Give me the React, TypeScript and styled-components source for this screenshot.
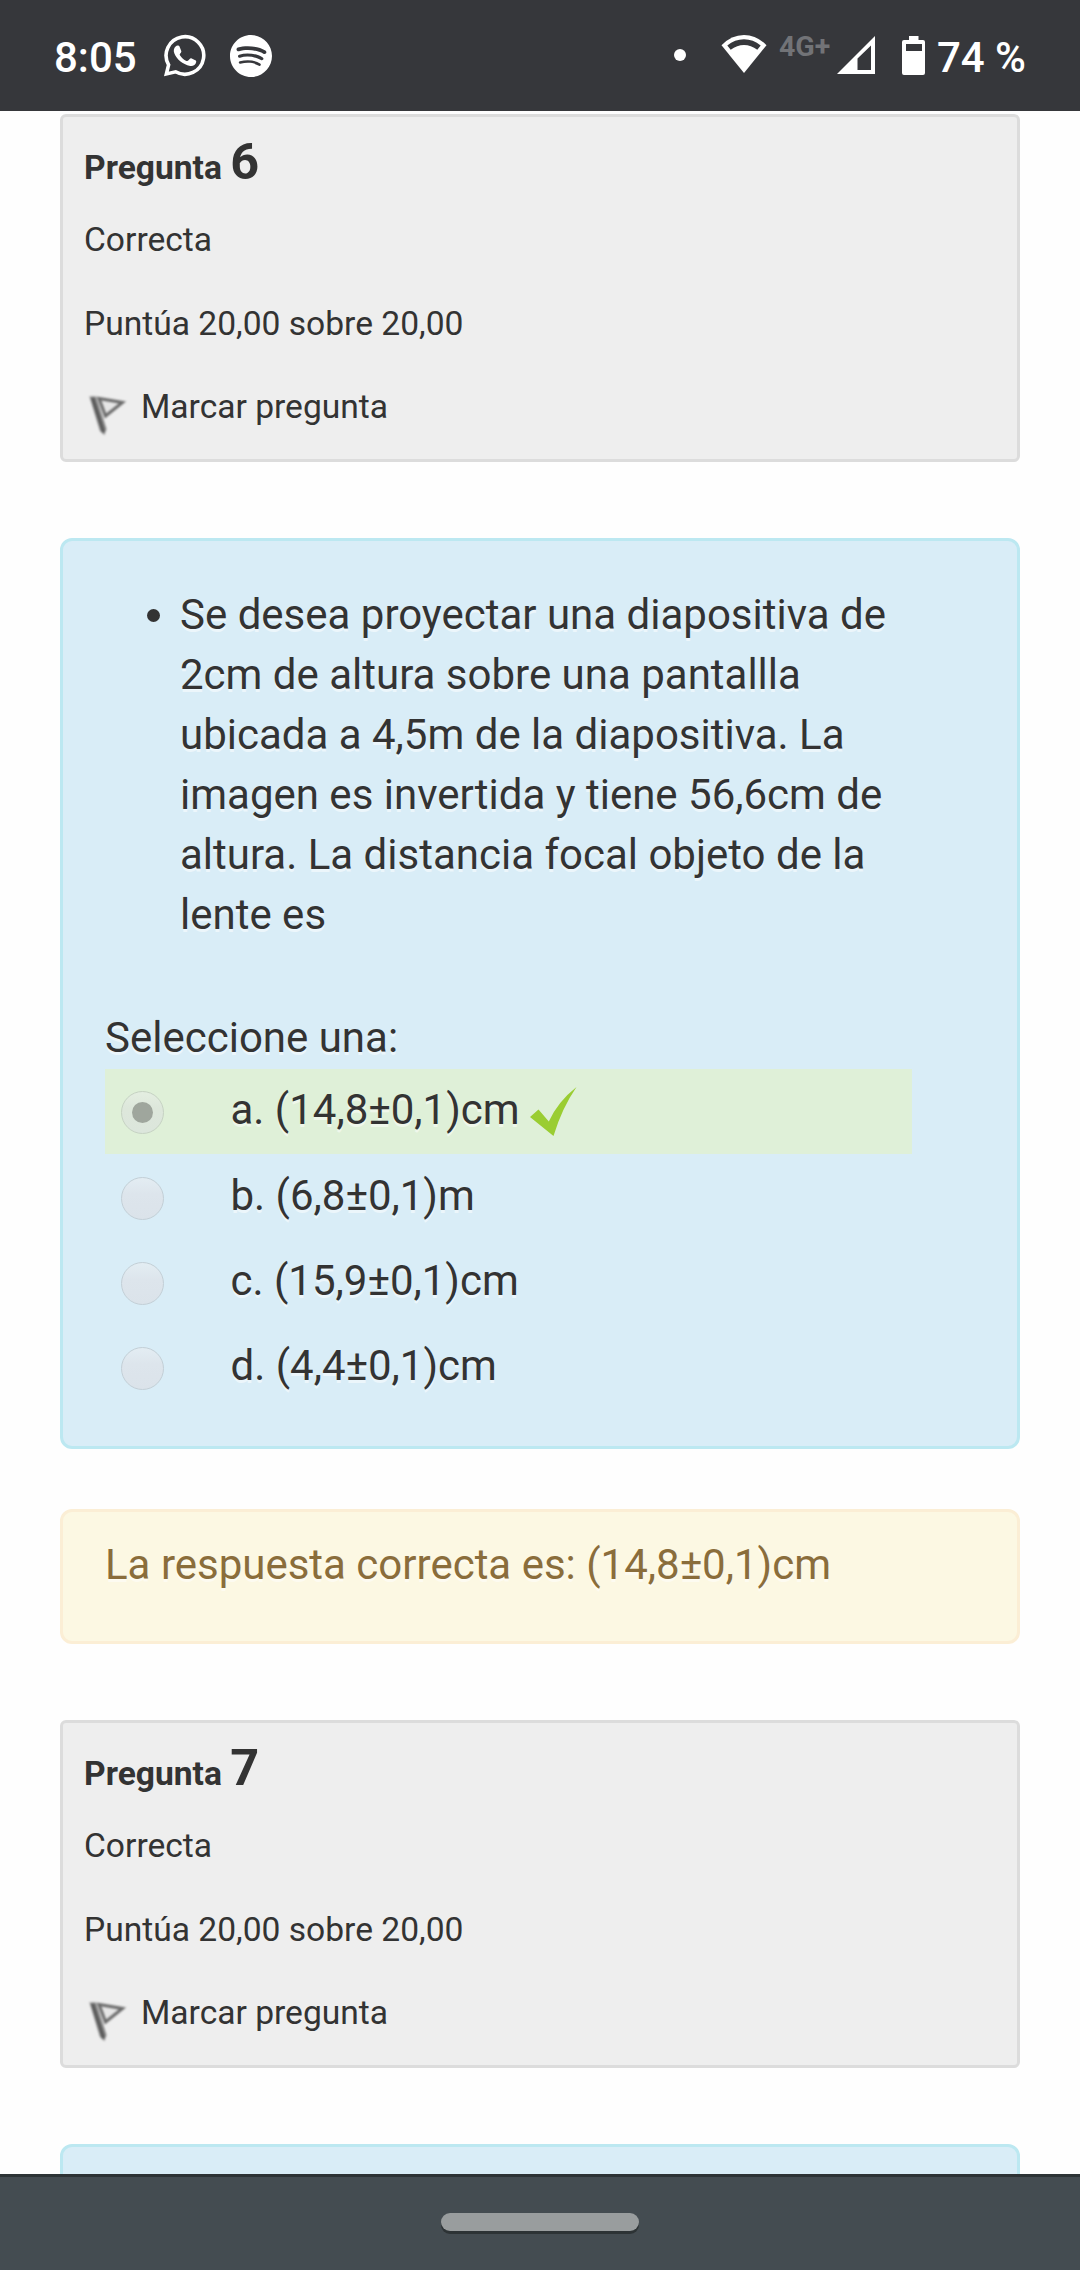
import React from "react";
import styled, { createGlobalStyle } from "styled-components";
import { SiSpotify } from "react-icons/si";

const GlobalStyle = createGlobalStyle`
  *, *::before, *::after { box-sizing: border-box; }
  html, body { margin: 0; padding: 0; background: #fefefe; }
  body { font-family: Roboto, "Liberation Sans", sans-serif; color: #333; }
`;

const Screen = styled.div`
  width: 1080px;
  height: 2270px;
  display: flex;
  flex-direction: column;
  overflow: hidden;
  background: #fefefe;
`;

const StatusBar = styled.header`
  flex: none;
  height: 111px;
  padding: 0 54px 0 54px;
  display: flex;
  justify-content: space-between;
  background: #36373b;
  color: #fff;
`;

const StatusGroup = styled.div`
  display: flex;
  align-items: flex-start;
`;

const StatusText = styled.span<{ $gap?: number }>`
  margin-left: ${(p) => p.$gap ?? 0}px;
  padding-top: 33px;
  font-size: 42px;
  font-weight: 500;
  line-height: 50px;
  white-space: pre;
`;

const NetworkLabel = styled.span`
  width: 51px;
  margin-left: 12px;
  padding-top: 30px;
  font-size: 28.5px;
  font-weight: 700;
  line-height: 34px;
  color: #727377;
`;

const StatusIcon = styled.span<{ $gap: number; $top: number }>`
  display: flex;
  margin-left: ${(p) => p.$gap}px;
  padding-top: ${(p) => p.$top}px;

  svg { display: block; }
`;

const Page = styled.main`
  flex: 1;
  min-height: 0;
  overflow: hidden;
  padding: 3px 60px 0;
`;

const InfoCard = styled.section`
  height: 348px;
  padding: 15px 21px 0;
  border: 3px solid #dcdcdc;
  border-radius: 6px;
  background: #eee;
  font-size: 33.6px;
  line-height: 60px;
`;

const InfoTitle = styled.h3`
  height: 78px;
  margin: 0;
  font-size: 33.6px;
  font-weight: 700;
  line-height: 60px;
`;

const QuestionNumber = styled.span`
  font-size: 50.4px;
`;

const InfoLine = styled.div`
  height: 60px;
  margin-bottom: 23.7px;
  display: flex;
`;

const FlagIcon = styled.svg`
  flex: none;
  width: 48px;
  height: 48px;
  margin: 13px 9px 0 0;
  filter: blur(1px);
`;

const QuestionCard = styled.section`
  height: 911px;
  margin-top: 76px;
  padding: 44px 42px 0;
  border: 3px solid #bce8f1;
  border-radius: 12px;
  background: #d9edf7;
  font-size: 42px;
  line-height: 60px;
  text-shadow: 0 3px 0 rgba(255, 255, 255, 0.5);
`;

const Stem = styled.ul`
  width: 800px;
  margin: 0 0 63px;
  padding-left: 75px;
`;

const Prompt = styled.div`
  height: 61.3px;
`;

const Option = styled.label<{ $correct?: boolean }>`
  width: 807px;
  height: 84.4px;
  margin-bottom: 0.9px;
  padding: 11.1px 0 0 16px;
  display: flex;
  background: ${(p) => (p.$correct ? "#dff0d8" : "transparent")};
`;

const Radio = styled.span<{ $checked?: boolean }>`
  flex: none;
  width: 43px;
  height: 43px;
  margin: 11px 66.5px 0 0;
  display: flex;
  align-items: center;
  justify-content: center;
  border: 1px solid ${(p) => (p.$checked ? "#c6d2c3" : "#c3cfd6")};
  border-radius: 50%;
  background: ${(p) =>
    p.$checked
      ? "linear-gradient(#e4eee1, #dde7db 40%, #dce6dc)"
      : "linear-gradient(#e3edf3, #dde5ec 40%, #dbe3ea)"};
`;

const RadioDot = styled.span`
  width: 21px;
  height: 21px;
  border-radius: 50%;
  background: #9fa69d;
`;

const Tick = styled.svg`
  width: 48px;
  height: 50px;
  margin: 5.5px 0 0 9.5px;
`;

const Feedback = styled.section`
  height: 135px;
  margin: 60px 0 76px;
  padding: 22.5px 42px 0;
  border: 3px solid #fbeed5;
  border-radius: 12px;
  background: #fcf8e3;
  color: #8a6d3b;
  font-size: 42px;
  line-height: 60px;
  text-shadow: 0 3px 0 rgba(255, 255, 255, 0.5);
`;

const NavBar = styled.footer`
  flex: none;
  height: 96px;
  padding-top: 36px;
  display: flex;
  justify-content: center;
  border-top: 3px solid #2d3335;
  background: #444c51;
`;

const HomePill = styled.div`
  width: 198px;
  height: 18px;
  border-radius: 9px;
  background: #999d9e;
  box-shadow: 0 3px 0 #2d3335;
`;

const WhatsAppIcon = () => (
  <svg width="44" height="44" viewBox="0 0 44 44" fill="none">
    <path
      d="M3.4 39.900 5.600 30.800A18.800 18.800 0 1 1 12.600 37.800Z"
      stroke="#fff"
      strokeWidth="3.6"
      strokeMiterlimit="10"
    />
    <path
      d="M12.600 12.400c1.200-1.200 3.300-1.200 3.900.2l1.700 4.100c.4 1-.1 1.700-.8 2.500-.8 1-.9 1.300-.3 2.200 1.800 2.700 3.600 4.300 6.300 5.500.9.400 1.400.2 2.100-.6l1.200-1.400c.6-.7 1.200-.8 2-.4l3.600 1.700c.9.500 1 .9.900 1.800-.5 3.100-3.400 4.500-6 4-7.900-1.600-13.500-6.900-15.900-12.700-1.100-2.800-.4-5.300 1.300-6.900Z"
      fill="#fff"
    />
  </svg>
);

const NotificationDot = () => (
  <svg width="12" height="12" viewBox="0 0 12 12">
    <circle cx="6" cy="6" r="6" fill="#fff" />
  </svg>
);

const WifiIcon = () => (
  <svg width="46" height="38" viewBox="0 0 46 38">
    <path d="M.5 10.200Q10.500 0 23 0T45.500 10.200L23 38Z" fill="#fff" />
    <path
      d="M6.300 10.400Q13.800 4.200 23 4.200T39.700 10.400L36.300 14.800Q30 10 23 10T9.700 14.800Z"
      fill="#36373b"
    />
  </svg>
);

const SignalIcon = () => (
  <svg width="38" height="38" viewBox="0 0 38 38">
    <path fillRule="evenodd" d="M38 0V38H0ZM34 9.500 20.500 22.500V34H34Z" fill="#fff" />
  </svg>
);

const BatteryIcon = () => (
  <svg width="23" height="39" viewBox="0 0 23 39">
    <path
      fillRule="evenodd"
      d="M7 0h9.500v4H21a2 2 0 0 1 2 2v31a2 2 0 0 1-2 2H2a2 2 0 0 1-2-2V6a2 2 0 0 1 2-2h5ZM4 8v7h16V8Z"
      fill="#fff"
    />
  </svg>
);

const Flag = () => (
  <FlagIcon viewBox="0 0 48 48" fill="none">
    <path d="M5.500 6.500H12L22.500 39 20.300 45 16 41Z" fill="#808080" />
    <path d="M8.500 8 19.500 42" stroke="#555" strokeWidth="2.600" />
    <path d="M15 8.500 38.500 12.500 21.500 26Z" fill="#e6e6e6" stroke="#6a6a6a" strokeWidth="3" />
  </FlagIcon>
);

interface InfoProps {
  number: number;
}

const QuestionInfo = ({ number }: InfoProps) => (
  <InfoCard>
    <InfoTitle>
      Pregunta <QuestionNumber>{number}</QuestionNumber>
    </InfoTitle>
    <InfoLine>Correcta</InfoLine>
    <InfoLine>Puntúa 20,00 sobre 20,00</InfoLine>
    <InfoLine>
      <Flag />
      <span>Marcar pregunta</span>
    </InfoLine>
  </InfoCard>
);

const options = [
  { text: "a. (14,8±0,1)cm", correct: true },
  { text: "b. (6,8±0,1)m", correct: false },
  { text: "c. (15,9±0,1)cm", correct: false },
  { text: "d. (4,4±0,1)cm", correct: false },
];

export default function App() {
  return (
    <>
      <GlobalStyle />
      <Screen>
        <StatusBar>
          <StatusGroup>
            <StatusText>8:05</StatusText>
            <StatusIcon $gap={26} $top={34}>
              <WhatsAppIcon />
            </StatusIcon>
            <StatusIcon $gap={23.3} $top={35}>
              <SiSpotify size={42} />
            </StatusIcon>
          </StatusGroup>
          <StatusGroup>
            <StatusIcon $gap={0} $top={49}>
              <NotificationDot />
            </StatusIcon>
            <StatusIcon $gap={35} $top={35}>
              <WifiIcon />
            </StatusIcon>
            <NetworkLabel>4G+</NetworkLabel>
            <StatusIcon $gap={7} $top={36}>
              <SignalIcon />
            </StatusIcon>
            <StatusIcon $gap={27} $top={36}>
              <BatteryIcon />
            </StatusIcon>
            <StatusText $gap={12}>74 %</StatusText>
          </StatusGroup>
        </StatusBar>

        <Page>
          <QuestionInfo number={6} />
          <QuestionCard>
            <Stem>
              <li>
                Se desea proyectar una diapositiva de 2cm de altura sobre una pantallla ubicada a
                4,5m de la diapositiva. La imagen es invertida y tiene 56,6cm de altura. La
                distancia focal objeto de la lente es
              </li>
            </Stem>
            <Prompt>Seleccione una:</Prompt>
            {options.map((o) => (
              <Option key={o.text} $correct={o.correct}>
                <Radio $checked={o.correct}>{o.correct && <RadioDot />}</Radio>
                <span>{o.text}</span>
                {o.correct && (
                  <Tick viewBox="0 0 48 50">
                    <path d="M1 31 9.500 23.500 19.800 35.500Q29 15.500 47.500 1Q33 22 24.500 50Z" fill="#9acd32" />
                  </Tick>
                )}
              </Option>
            ))}
          </QuestionCard>
          <Feedback>La respuesta correcta es: (14,8±0,1)cm</Feedback>
          <QuestionInfo number={7} />
          <QuestionCard />
        </Page>

        <NavBar>
          <HomePill />
        </NavBar>
      </Screen>
    </>
  );
}
